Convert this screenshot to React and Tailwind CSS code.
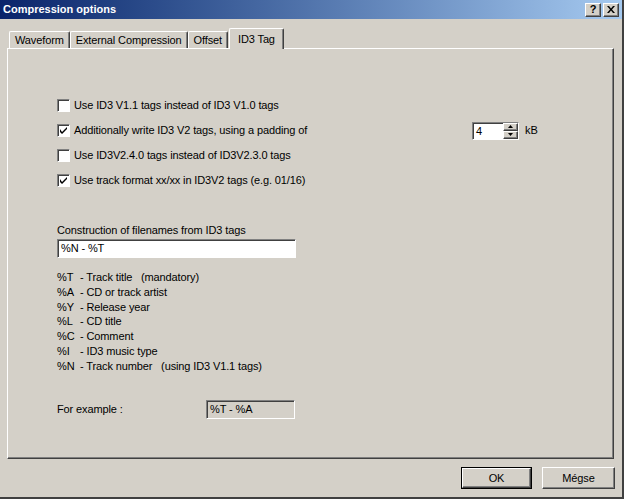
import React from 'react';

const raised =
  'bg-[#d4d0c8] border border-t-white border-l-white border-r-[#404040] border-b-[#404040] shadow-[inset_-1px_-1px_#808080]';
const sunken =
  'border border-t-[#808080] border-l-[#808080] border-r-white border-b-white shadow-[inset_1px_1px_#404040]';

const Check = ({ checked }) => (
  <span className={`w-[13px] h-[13px] bg-white flex items-center justify-center shrink-0 ${sunken}`}>
    {checked && (
      <svg width="7" height="7" viewBox="0 0 7 7">
        <path d="M0 2 L0 5 L2 7 L7 2 L7 0 L2 5 Z" fill="#000" />
      </svg>
    )}
  </span>
);

const CheckRow = ({ checked, children }) => (
  <div className="h-[25px] flex items-center gap-[4px]">
    <Check checked={checked} />
    {children}
  </div>
);

const Tab = ({ label, active }) => (
  <div
    className={
      active
        ? 'relative z-10 -mb-px h-[21px] px-[8px] flex items-center bg-[#d4d0c8] border-t border-l border-t-white border-l-white border-r border-r-[#404040] shadow-[inset_-1px_0_#808080] rounded-t-[2px] ml-[1px]'
        : 'h-[17px] px-[5px] flex items-center bg-[#d4d0c8] border-t border-l border-t-white border-l-white border-r border-r-[#404040] shadow-[inset_-1px_0_#808080] rounded-t-[2px]'
    }
  >
    {label}
  </div>
);

const legend = [
  ['%T', '- Track title   (mandatory)'],
  ['%A', '- CD or track artist'],
  ['%Y', '- Release year'],
  ['%L', '- CD title'],
  ['%C', '- Comment'],
  ['%I', '- ID3 music type'],
  ['%N', '- Track number   (using ID3 V1.1 tags)'],
];

export default function App() {
  return (
    <div
      className="w-[624px] h-[499px] flex flex-col bg-[#d4d0c8] border-r-2 border-b-2 border-r-[#404040] border-b-[#404040] text-[11px] tracking-[-0.12px] text-black overflow-hidden"
      style={{ fontFamily: '"Liberation Sans", Arial, sans-serif' }}
    >
      {/* Title bar */}
      <div className="h-[19px] flex items-center justify-between pl-[3px] pr-[3px] bg-gradient-to-r from-[#0a246a] to-[#a6caf0]">
        <span className="text-white font-bold text-[11px] tracking-normal">Compression options</span>
        <div className="flex gap-[2px]">
          <div className={`w-[16px] h-[14px] flex items-center justify-center font-bold text-[11px] leading-none ${raised}`}>?</div>
          <div className={`w-[16px] h-[14px] flex items-center justify-center ${raised}`}>
            <svg width="8" height="7" viewBox="0 0 8 7">
              <path d="M0 0 H2 L4 2.5 L6 0 H8 L5 3.5 L8 7 H6 L4 4.5 L2 7 H0 L3 3.5 Z" fill="#000" />
            </svg>
          </div>
        </div>
      </div>

      {/* Tabs */}
      <div className="flex items-end pl-[9px] mt-[9px]">
        <Tab label="Waveform" />
        <Tab label="External Compression" />
        <Tab label="Offset" />
        <Tab label="ID3 Tag" active />
      </div>

      {/* Panel */}
      <div className={`ml-[7px] w-[607px] h-[411px] pl-[49px] pt-[44px] ${raised.replace('bg-[#d4d0c8] ', '')}`}>
        <CheckRow>Use ID3 V1.1 tags instead of ID3 V1.0 tags</CheckRow>
        <div className="h-[25px] flex items-center">
          <div className="w-[415px] flex items-center gap-[4px]">
            <Check checked />
            Additionally write ID3 V2 tags, using a padding of
          </div>
          <div className={`w-[47px] h-[18px] flex bg-white ${sunken}`}>
            <span className="flex-1 pl-[3px] leading-[16px]">4</span>
            <div className="w-[15px] flex flex-col">
              <div className={`flex-1 flex items-center justify-center ${raised}`}>
                <svg width="5" height="3" viewBox="0 0 5 3"><path d="M2.5 0 L5 3 H0 Z" fill="#000" /></svg>
              </div>
              <div className={`flex-1 flex items-center justify-center ${raised}`}>
                <svg width="5" height="3" viewBox="0 0 5 3"><path d="M0 0 H5 L2.5 3 Z" fill="#000" /></svg>
              </div>
            </div>
          </div>
          <span className="ml-[6px]">kB</span>
        </div>
        <CheckRow>Use ID3V2.4.0 tags instead of ID3V2.3.0 tags</CheckRow>
        <CheckRow checked>Use track format xx/xx in ID3V2 tags (e.g. 01/16)</CheckRow>

        <div className="mt-[30px] leading-[14px]">Construction of filenames from ID3 tags</div>
        <div className={`mt-[2px] w-[239px] h-[19px] bg-white pl-[3px] leading-[17px] ${sunken}`}>%N - %T</div>

        <div className="mt-[12px] leading-[14.8px]">
          {legend.map(([k, v]) => (
            <div key={k} className="flex">
              <span className="w-[23px]">{k}</span>
              <span className="whitespace-pre">{v}</span>
            </div>
          ))}
        </div>

        <div className="mt-[26px] flex items-center">
          <span className="w-[149px]">For example :</span>
          <div className={`w-[89px] h-[19px] pl-[3px] leading-[17px] bg-[#d4d0c8] ${sunken}`}>%T - %A</div>
        </div>
      </div>

      {/* Buttons */}
      <div className="flex justify-end gap-[10px] pr-[7px] mt-[8px]">
        <div className="w-[71px] h-[22px] border border-black">
          <div className={`w-full h-full flex items-center justify-center ${raised}`}>OK</div>
        </div>
        <div className={`w-[73px] h-[22px] flex items-center justify-center ${raised}`}>Mégse</div>
      </div>
    </div>
  );
}
